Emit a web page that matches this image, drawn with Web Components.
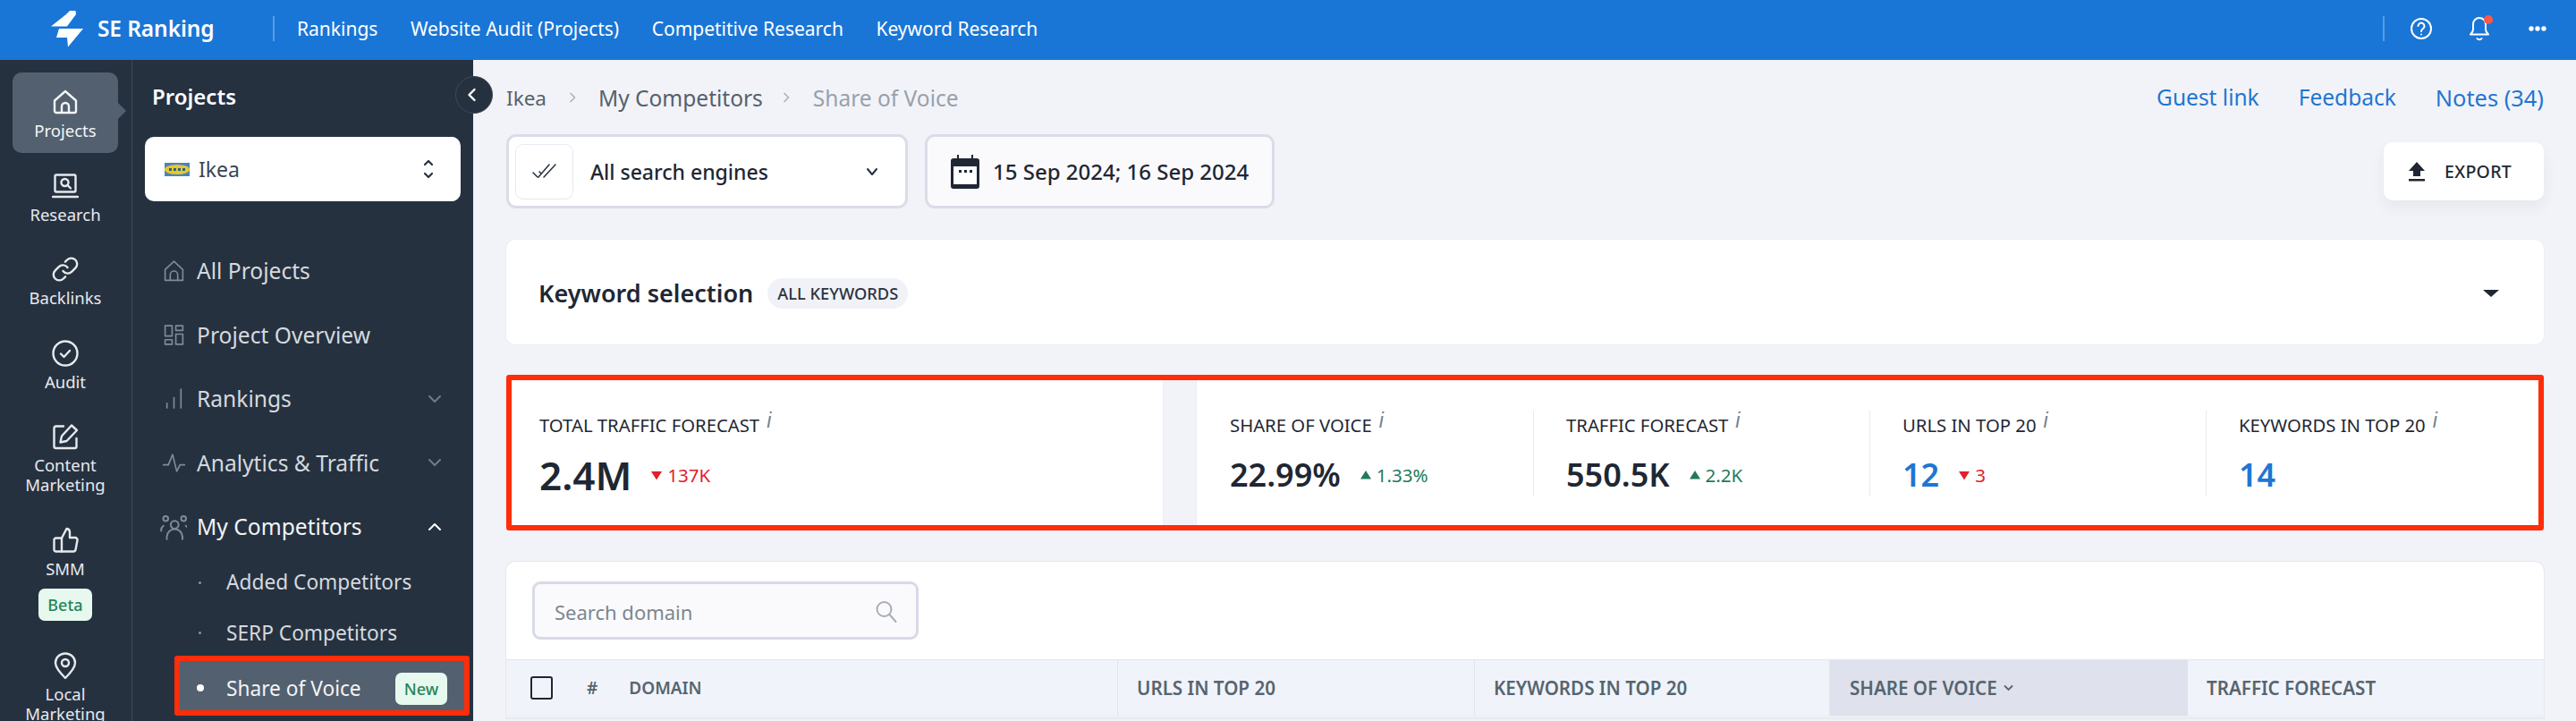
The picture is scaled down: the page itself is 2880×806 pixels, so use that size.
<!DOCTYPE html>
<html lang="en">
<head>
<meta charset="utf-8">
<title>Share of Voice - SE Ranking</title>
<style>
html, body { margin: 0; height: 806px; overflow: hidden; background: #f2f3f8; }
body { font-family: "Noto Sans", "Open Sans", sans-serif; }
</style>
</head>
<body>
<se-app>
  <se-topbar slot="top"></se-topbar>
  <se-rail slot="rail">
    <rail-item icon="home" active>Projects</rail-item>
    <rail-item icon="research">Research</rail-item>
    <rail-item icon="link">Backlinks</rail-item>
    <rail-item icon="audit">Audit</rail-item>
    <rail-item icon="content">Content<br>Marketing</rail-item>
    <rail-item icon="thumb">SMM<status-pill slot="badge">Beta</status-pill></rail-item>
    <rail-item icon="pin">Local<br>Marketing</rail-item>
  </se-rail>
  <se-sidebar slot="side">
    <side-item icon="house">All Projects</side-item>
    <side-item icon="grid">Project Overview</side-item>
    <side-item icon="bars" chevron="down">Rankings</side-item>
    <side-item icon="pulse" chevron="down">Analytics &amp; Traffic</side-item>
    <side-item icon="people" chevron="up" open>My Competitors</side-item>
    <sub-item>Added Competitors</sub-item>
    <sub-item>SERP Competitors</sub-item>
    <sub-item active>Share of Voice<status-pill slot="badge">New</status-pill></sub-item>
  </se-sidebar>
  <se-main slot="main"></se-main>
</se-app>

<script>
const ICONS = {
  home: '<path d="M3 13.500 15 3l12 10.500V25a2 2 0 0 1-2 2H5a2 2 0 0 1-2-2z"/><path d="M11 27v-7a4 4 0 0 1 8 0v7"/>',
  research: '<rect x="3.500" y="2.500" width="23" height="19" rx="1.500"/><path d="M1 27h28"/><circle cx="14.500" cy="11" r="4"/><path d="m17.500 14 3.500 3.500"/>',
  link: '<path d="M12.500 17a6.500 6.500 0 0 0 9.800.7l4-4a6.500 6.500 0 0 0-9.200-9.200l-2.200 2.200"/><path d="M17.500 13a6.500 6.500 0 0 0-9.800-.7l-4 4a6.500 6.500 0 0 0 9.200 9.200l2.200-2.200"/>',
  audit: '<circle cx="15" cy="15" r="13.500"/><path d="m10 15.500 3.500 3.500 6.500-7"/>',
  content: '<path d="M13 3.500H4.500a2 2 0 0 0-2 2V26a2 2 0 0 0 2 2H25.500a2 2 0 0 0 2-2v-9"/><path d="M22 2.500 28 8 16.500 20l-7 1.500L11 14.500z"/>',
  thumb: '<path d="M11 12.500 16.500 2a4 4 0 0 1 3.500 4v6h6a2.500 2.500 0 0 1 2.500 3l-2 10.500a2.500 2.500 0 0 1-2.500 2H11z"/><path d="M11 12.500H4.500a2 2 0 0 0-2 2V26a2 2 0 0 0 2 1.500H11"/>',
  pin: '<path d="M15 1.500C8.500 1.500 4 6.500 4 12c0 6 6.500 12.500 11 17 4.500-4.500 11-11 11-17 0-5.500-4.500-10.500-11-10.500z"/><circle cx="15" cy="12" r="4"/>',
  house: '<path d="M2.500 11 12 2 21.500 11v11.500h-19z"/><path d="M8 22.500v-6a4 4 0 0 1 8 0v6"/>',
  grid: '<rect x="2.500" y="2" width="7.500" height="11"/><rect x="14" y="2" width="7.500" height="5"/><rect x="2.500" y="17" width="7.500" height="5"/><rect x="14" y="11" width="7.500" height="11"/>',
  bars: '<path d="M4.500 22v-5M12 22V11M19.500 22V2"/>',
  pulse: '<path d="M0 14h6l4.500-11 4.500 18 3.500-7H24"/>',
  people: '<circle cx="13" cy="10" r="3.500"/><circle cx="5" cy="4.500" r="2.200"/><circle cx="21" cy="4.500" r="2.200"/><path d="M6 23v-2a6 6 0 0 1 14 0v2M1 15.500a5 5 0 0 1 2-4.500M25 15.500a5 5 0 0 0-2-4.500"/>'
};

function svgIcon(name, size, stroke) {
  const vb = ["house", "grid", "bars", "pulse", "people"].includes(name) ? 24 : 30;
  return `<svg width="${size}" height="${size}" viewBox="0 0 ${vb} ${vb}" fill="none" stroke="currentColor" stroke-width="${stroke}" stroke-linecap="round" stroke-linejoin="round">${ICONS[name]}</svg>`;
}

class Base extends HTMLElement {
  constructor() {
    super();
    this.attachShadow({ mode: "open" });
  }
  paint(html) {
    this.shadowRoot.innerHTML = html;
  }
}

class SeApp extends Base {
  connectedCallback() {
    this.paint(`<style>
      :host { display: grid; grid-template-columns: 148px 381px 1fr; grid-template-rows: 67px 739px; width: 2880px; height: 806px; overflow: hidden; }
      .top { grid-column: 1 / 4; }
      .collapse { position: absolute; left: 509px; top: 85px; width: 42px; height: 42px; box-sizing: border-box; border-radius: 50%; background: #263140; border: 1px solid #3d4957; color: #fff; display: flex; align-items: center; padding-left: 11px; z-index: 3; }
    </style>
    <div class="top"><slot name="top"></slot></div>
    <slot name="rail"></slot>
    <slot name="side"></slot>
    <slot name="main"></slot>
    <div class="collapse"><svg width="14" height="16" viewBox="0 0 14 16" fill="none" stroke="currentColor" stroke-width="2.400" stroke-linecap="round" stroke-linejoin="round"><path d="M9.500 2 3.500 8l6 6"/></svg></div>`);
  }
}

class SeTopbar extends Base {
  connectedCallback() {
    this.paint(`<style>
      :host { display: flex; align-items: center; height: 67px; background: #1976d6; color: #fff; font-size: 21px; padding: 0 0 3px 57px; box-sizing: border-box; }
      .logo { display: block; margin-right: 16px; }
      .brand { font-size: 24.500px; font-weight: 600; letter-spacing: -.1px; width: 196px; border-right: 2px solid rgba(255,255,255,.28); line-height: 28px; margin-right: 25px; }
      nav { display: flex; gap: 36.500px; flex: 1; }
      .tools { display: flex; align-items: center; height: 28px; border-left: 2px solid rgba(255,255,255,.28); margin-right: 33px; padding-left: 29px; }
      .bell { position: relative; display: block; height: 30px; margin: 0 43px 0 41px; }
      .bell i { position: absolute; right: -3px; top: 0; width: 10px; height: 10px; border-radius: 50%; background: #f8594b; }
    </style>
    <svg class="logo" width="36" height="42" viewBox="0 0 36 42" fill="#fff"><path d="M21 1 27.500 1 28 5 18 18.500H0L17 5z"/><path d="M9 21H36L19 41.500 18 31H6z"/></svg>
    <div class="brand">SE Ranking</div>
    <nav><span>Rankings</span><span>Website Audit (Projects)</span><span>Competitive Research</span><span>Keyword Research</span></nav>
    <div class="tools">
      <svg width="24" height="24" viewBox="0 0 24 24" fill="none" stroke="currentColor" stroke-width="2" stroke-linecap="round"><circle cx="12" cy="12" r="11"/><path d="M8.500 9a3.500 3.500 0 1 1 5.500 3c-1.300.8-2 1.500-2 3"/><path d="M12 18.500v.1"/></svg>
      <span class="bell"><svg width="24" height="30" viewBox="0 0 24 30" fill="none" stroke="currentColor" stroke-width="2" stroke-linecap="round" stroke-linejoin="round"><path d="M12 3a7 7 0 0 0-7 7v6c0 2-1.500 4-3 5.500h20c-1.500-1.500-3-3.500-3-5.500v-6a7 7 0 0 0-7-7z"/><path d="M9.500 26a3 3 0 0 0 5 0"/></svg><i></i></span>
      <svg width="20" height="6" viewBox="0 0 20 6" fill="#fff"><circle cx="3" cy="3" r="2.700"/><circle cx="10" cy="3" r="2.700"/><circle cx="17" cy="3" r="2.700"/></svg>
    </div>`);
  }
}

class SeRail extends Base {
  connectedCallback() {
    this.paint(`<style>
      :host { display: flex; flex-direction: column; gap: 3.500px; height: 739px; overflow: hidden; box-sizing: border-box; padding: 14px 0 0 14px; background: #263140; border-right: 1px solid #3d4957; }
    </style><slot></slot>`);
  }
}

class RailItem extends Base {
  connectedCallback() {
    this.paint(`<style>
      :host { display: flex; flex-direction: column; align-items: center; flex: none; position: relative; width: 118px; box-sizing: border-box; padding: 18px 0 14px; border-radius: 10px; color: #e6e9ec; font-size: 18.500px; line-height: 22px; text-align: center; }
      :host([active]) { background: #52606f; color: #f4f5f7; }
      :host([active])::after { content: ""; position: absolute; right: -9px; top: 34px; border-left: 9px solid #52606f; border-top: 9px solid transparent; border-bottom: 9px solid transparent; }
      svg { display: block; margin-bottom: 6px; }
      ::slotted([slot=badge]) { margin-top: 11px; }
    </style>${svgIcon(this.getAttribute("icon"), 30, 2.400)}<slot></slot><slot name="badge"></slot>`);
  }
}

class StatusPill extends Base {
  connectedCallback() {
    this.paint(`<style>
      :host { display: block; width: 60px; height: 36px; line-height: 36px; text-align: center; border-radius: 7px; background: #e7f8ef; color: #23855b; font-size: 18px; font-weight: 500; }
    </style><slot></slot>`);
  }
}

class SeSidebar extends Base {
  connectedCallback() {
    this.paint(`<style>
      :host { display: block; height: 739px; overflow: hidden; background: #263140; color: #d5dade; }
      h2 { margin: 0; padding: 24px 0 0 22px; height: 64px; box-sizing: border-box; font-size: 24px; line-height: 34px; font-weight: 600; color: #fff; }
      .picker { display: flex; align-items: center; margin: 22px 0 0 14px; width: 353px; height: 72px; box-sizing: border-box; padding: 0 30px 0 22px; background: #fff; border-radius: 10px; color: #3a4655; font-size: 23px; }
      .flag { margin-right: 10px; }
      .name { flex: 1; }
      .list { padding-top: 42px; }
    </style>
    <h2>Projects</h2>
    <div class="picker">
      <svg class="flag" width="28" height="15" viewBox="0 0 28 15"><rect width="28" height="15" fill="#4b82bd"/><ellipse cx="14" cy="7.500" rx="14" ry="5.500" fill="#e3c92c"/><path d="M5 7.500h18" stroke="#2f5c8c" stroke-width="3" stroke-dasharray="3 2"/></svg>
      <span class="name">Ikea</span>
      <svg width="12" height="22" viewBox="0 0 12 22" fill="none" stroke="#263140" stroke-width="2.200" stroke-linecap="round" stroke-linejoin="round"><path d="m2 6 4-4 4 4M2 16l4 4 4-4"/></svg>
    </div>
    <div class="list"><slot></slot></div>`);
  }
}

class SideItem extends Base {
  connectedCallback() {
    const chev = this.getAttribute("chevron");
    const arrow = chev ? `<svg class="chev" width="16" height="10" viewBox="0 0 16 10" fill="none" stroke="currentColor" stroke-width="2" stroke-linecap="round" stroke-linejoin="round"><path d="${chev === "up" ? "M2 8l6-6 6 6" : "M2 2l6 6 6-6"}"/></svg>` : "";
    this.paint(`<style>
      :host { display: flex; align-items: center; height: 71.500px; font-size: 24.600px; padding-left: 29px; box-sizing: border-box; color: #d5dade; }
      :host([open]) { color: #f2f4f6; margin-bottom: -2px; }
      .ico { color: #7f8b97; width: 34px; display: flex; justify-content: center; margin-right: 9px; }
      .label { flex: 1; }
      .chev { margin-right: 35px; color: #6f7c88; }
      :host([open]) .chev { color: #fff; }
    </style><span class="ico">${svgIcon(this.getAttribute("icon"), this.getAttribute("icon") === "people" ? 30 : 25, 1.600)}</span><span class="label"><slot></slot></span>${arrow}`);
  }
}

class SubItem extends Base {
  connectedCallback() {
    this.paint(`<style>
      :host { display: flex; align-items: center; position: relative; height: 56.500px; margin-left: 50px; width: 324px; box-sizing: border-box; padding-left: 55px; font-size: 22.700px; color: #d5dade; }
      :host::before { content: ""; position: absolute; left: 24px; top: 50%; width: 3px; height: 3px; margin-top: -1px; border-radius: 50%; background: #8a95a0; }
      :host([active]) { height: 64px; padding-top: 4px; background: #52606f; color: #f2f4f6; }
      :host([active])::before { left: 22px; width: 8px; height: 8px; margin-top: -3px; background: #fff; }
      ::slotted([slot=badge]) { margin-left: auto; margin-right: 22px; width: 58px; }
      .mark { position: absolute; left: -3px; right: -3px; top: -3px; bottom: 0; border: 6px solid #ff2d0a; border-radius: 3px; pointer-events: none; }
    </style><slot></slot><slot name="badge"></slot>${this.hasAttribute("active") ? '<div class="mark"></div>' : ""}`);
  }
}

class SeMain extends Base {
  connectedCallback() {
    this.paint(`<style>
      :host { display: flex; flex-direction: column; height: 739px; box-sizing: border-box; overflow: hidden; padding: 23px 36px 0 37px; background: #f2f3f8; color: #1f2733; }
      .gap1 { height: 22px; flex: none; }
      .gap2 { height: 35px; flex: none; }
      .gap3 { height: 34px; flex: none; }
    </style>
    <crumb-row></crumb-row><div class="gap1"></div>
    <filter-row></filter-row><div class="gap2"></div>
    <keyword-card></keyword-card><div class="gap3"></div>
    <metric-row></metric-row><div class="gap2"></div>
    <domain-table></domain-table>`);
  }
}

class CrumbRow extends Base {
  connectedCallback() {
    this.paint(`<style>
      :host { display: flex; align-items: center; height: 38px; flex: none; font-size: 24.500px; color: #55616e; }
      svg { margin: 0 25px; color: #a4acb5; }
      .home { font-size: 22.500px; }
      .second { margin: 0 26px 0 22px; }
      .last { color: #98a1ab; }
      .links { margin-left: auto; display: flex; gap: 44px; color: #1f76d3; }
      .notes { font-size: 25.400px; }
    </style>
    <span class="home">Ikea</span><svg width="8" height="14" viewBox="0 0 8 14" fill="none" stroke="currentColor" stroke-width="1.400"><path d="m1.500 2 5 5-5 5"/></svg>
    <span>My Competitors</span><svg class="second" width="8" height="14" viewBox="0 0 8 14" fill="none" stroke="currentColor" stroke-width="1.400"><path d="m1.500 2 5 5-5 5"/></svg>
    <span class="last">Share of Voice</span>
    <div class="links"><span>Guest link</span><span>Feedback</span><span class="notes">Notes (34)</span></div>`);
  }
}

class FilterRow extends Base {
  connectedCallback() {
    this.paint(`<style>
      :host { display: flex; align-items: center; height: 83px; flex: none; font-size: 23px; color: #1f2733; }
      .box { display: flex; align-items: center; height: 83px; box-sizing: border-box; border: 3px solid #dadce8; border-radius: 11px; }
      .engine { width: 449px; background: #fff; padding-left: 7px; }
      .tile { width: 65px; height: 62px; box-sizing: border-box; border: 1px solid #e8e9f2; border-radius: 9px; display: flex; align-items: center; justify-content: center; margin-right: 19px; }
      .engine .txt { flex: 1; font-weight: 500; }
      .engine .arrow { margin-right: 30px; }
      .date { width: 391px; margin-left: 19px; background: #fafafd; padding-left: 26px; font-size: 24px; font-weight: 500; }
      .date svg { margin-right: 15px; }
      .export { margin-left: auto; width: 179px; height: 65px; box-sizing: border-box; padding-left: 28px; display: flex; align-items: center; background: #fff; border-radius: 10px; box-shadow: 0 8px 16px rgba(40,50,90,.06); font-size: 19.500px; font-weight: 500; letter-spacing: .3px; }
      .export svg { margin-right: 22px; }
    </style>
    <div class="box engine">
      <div class="tile"><svg width="28" height="20" viewBox="0 0 28 20" fill="none" stroke="#263140" stroke-width="1.500" stroke-linecap="round"><path d="m1 11 5 5M7 16 19 2M13 16 26 2M8 10l2 2"/></svg></div>
      <span class="txt">All search engines</span>
      <svg class="arrow" width="14" height="10" viewBox="0 0 14 10" fill="none" stroke="#263140" stroke-width="2" stroke-linecap="round" stroke-linejoin="round"><path d="m2 2 5 6 5-6"/></svg>
    </div>
    <div class="box date">
      <svg width="32" height="38" viewBox="0 0 32 38"><path fill="#1f2733" d="M7 0h2v4h14V0h2v4h4a3 3 0 0 1 3 3v28a3 3 0 0 1-3 3H3a3 3 0 0 1-3-3V7a3 3 0 0 1 3-3h4z"/><rect x="3" y="13" width="26" height="20" fill="#fff"/><path fill="#1f2733" d="M9 17h3v3H9zM15 17h3v3h-3zM21 17h3v3h-3z"/></svg>
      <span>15 Sep 2024; 16 Sep 2024</span>
    </div>
    <div class="export">
      <svg width="18" height="22" viewBox="0 0 18 22" fill="#1f2733"><path d="M9 0 18 10H13V16H5V10H0z"/><rect y="19" width="18" height="2.500"/></svg>
      <span>EXPORT</span>
    </div>`);
  }
}

class KeywordCard extends Base {
  connectedCallback() {
    this.paint(`<style>
      :host { display: flex; align-items: center; height: 117px; flex: none; box-sizing: border-box; padding: 2px 50px 0 36px; background: #fff; border-radius: 10px; box-shadow: 0 0 0 1px #eceef4; }
      b { font-size: 27px; font-weight: 600; margin-right: 16px; }
      .chip { height: 34px; line-height: 34px; padding: 0 11px; background: #f1f2f7; border-radius: 17px; font-size: 18.300px; font-weight: 500; color: #2a3340; }
      i { margin-left: auto; border-top: 8px solid #1f2733; border-left: 9px solid transparent; border-right: 9px solid transparent; }
    </style><b>Keyword selection</b><span class="chip">ALL KEYWORDS</span><i></i>`);
  }
}

class MetricRow extends Base {
  connectedCallback() {
    this.paint(`<style>
      :host { display: flex; position: relative; height: 174px; flex: none; gap: 38px; }
      .card { background: #fff; box-sizing: border-box; padding: 40px 0 0; border-radius: 8px; box-shadow: 0 0 0 1px #eceef4; }
      .one { width: 734px; }
      .four { flex: 1; display: grid; grid-template-columns: 376px 376px 376px 1fr; }
      .mark { position: absolute; inset: 0; border: 6px solid #ff2d0a; border-radius: 3px; pointer-events: none; }
    </style>
    <div class="card one"><metric-tile label="TOTAL TRAFFIC FORECAST" value="2.4M" big delta="137K" dir="down"></metric-tile></div>
    <div class="card four">
      <metric-tile label="SHARE OF VOICE" value="22.99%" delta="1.33%" dir="up"></metric-tile>
      <metric-tile divided label="TRAFFIC FORECAST" value="550.5K" delta="2.2K" dir="up"></metric-tile>
      <metric-tile divided link label="URLS IN TOP 20" value="12" delta="3" dir="down"></metric-tile>
      <metric-tile divided link label="KEYWORDS IN TOP 20" value="14"></metric-tile>
    </div>
    <div class="mark"></div>`);
  }
}

class MetricTile extends Base {
  connectedCallback() {
    const dir = this.getAttribute("dir");
    const delta = this.getAttribute("delta");
    let change = "";
    if (delta) {
      const tri = dir === "up"
        ? '<svg width="12" height="10" viewBox="0 0 12 10" fill="#23795a"><path d="M6 0 12 9.500H0z"/></svg>'
        : '<svg width="12" height="11" viewBox="0 0 12 11" fill="#e3202c"><path d="M0 1h12L6 10.500z"/></svg>';
      change = `<span class="delta ${dir}">${tri}${delta}</span>`;
    }
    this.paint(`<style>
      :host { display: block; height: 96px; box-sizing: border-box; padding-left: 37px; }
      :host([divided]) { border-left: 1px solid #e9ebf0; padding-left: 36px; }
      .label { display: flex; height: 32px; align-items: center; font-size: 20.300px; color: #1f2733; }
      .label i { font-size: 23px; font-style: italic; color: #77828d; margin: -9px 0 0 8px; font-family: "Liberation Sans", sans-serif; }
      .row { display: flex; align-items: center; height: 52px; margin-top: 14px; }
      .value { font-size: 36px; font-weight: 600; color: #1f2733; line-height: 52px; }
      :host([big]) .value { font-size: 44px; }
      :host([link]) .value { color: #1f76d3; }
      .delta { display: flex; align-items: center; gap: 6px; margin-left: 22px; font-size: 20.500px; }
      .up { color: #23795a; } .down { color: #e3202c; }
    </style>
    <div class="label"><span>${this.getAttribute("label")}</span><i>i</i></div>
    <div class="row"><span class="value">${this.getAttribute("value")}</span>${change}</div>`);
  }
}

class DomainTable extends Base {
  connectedCallback() {
    this.paint(`<style>
      :host { display: block; flex: none; background: #fff; border-radius: 10px 10px 0 0; box-shadow: 0 0 0 1px #e6e8f0; height: 175px; }
      .search { display: flex; align-items: center; margin: 22px 0 0 29px; width: 432px; height: 65px; box-sizing: border-box; padding: 2px 21px 0 22px; border: 3px solid #d8dae6; border-radius: 9px; background: #fafafd; color: #7b8792; font-size: 22px; }
      .search span { flex: 1; }
      .head { display: grid; grid-template-columns: 684px 399px 397px 400px 1fr; height: 66px; margin-top: 22px; background: #f1f3fb; border-top: 1px solid #e3e5ee; border-bottom: 3px solid #eeeef3; box-sizing: border-box; font-size: 20.600px; font-weight: 600; color: #55656f; }
      .cell { display: flex; align-items: center; box-sizing: border-box; padding-left: 21px; border-right: 1px solid #e3e5ee; }
      .first { padding-left: 27px; font-size: 19px; }
      .box { width: 25px; height: 26px; box-sizing: border-box; border: 2.500px solid #1f2733; border-radius: 3px; margin-right: 38px; }
      .hash { margin-right: 35px; }
      .active { background: #dfe1ec; border-right: 0; padding-left: 22px; }
      .active svg { margin-left: 7px; }
      .cell:last-child { border-right: 0; }
    </style>
    <div class="search"><span>Search domain</span>
      <svg width="24" height="26" viewBox="0 0 24 26" fill="none" stroke="#a6aeb7" stroke-width="2" stroke-linecap="round"><circle cx="9.500" cy="10" r="8"/><path d="m15.500 16 7 8"/></svg>
    </div>
    <div class="head">
      <div class="cell first"><span class="box"></span><span class="hash">#</span><span>DOMAIN</span></div>
      <div class="cell">URLS IN TOP 20</div>
      <div class="cell">KEYWORDS IN TOP 20</div>
      <div class="cell active">SHARE OF VOICE<svg width="11" height="8" viewBox="0 0 11 8" fill="none" stroke="#55656f" stroke-width="1.800"><path d="m1 1.500 4.500 4.500 4.500-4.500"/></svg></div>
      <div class="cell">TRAFFIC FORECAST</div>
    </div>`);
  }
}

customElements.define("se-app", SeApp);
customElements.define("se-topbar", SeTopbar);
customElements.define("se-rail", SeRail);
customElements.define("rail-item", RailItem);
customElements.define("status-pill", StatusPill);
customElements.define("se-sidebar", SeSidebar);
customElements.define("side-item", SideItem);
customElements.define("sub-item", SubItem);
customElements.define("se-main", SeMain);
customElements.define("crumb-row", CrumbRow);
customElements.define("filter-row", FilterRow);
customElements.define("keyword-card", KeywordCard);
customElements.define("metric-row", MetricRow);
customElements.define("metric-tile", MetricTile);
customElements.define("domain-table", DomainTable);
</script>
</body>
</html>
